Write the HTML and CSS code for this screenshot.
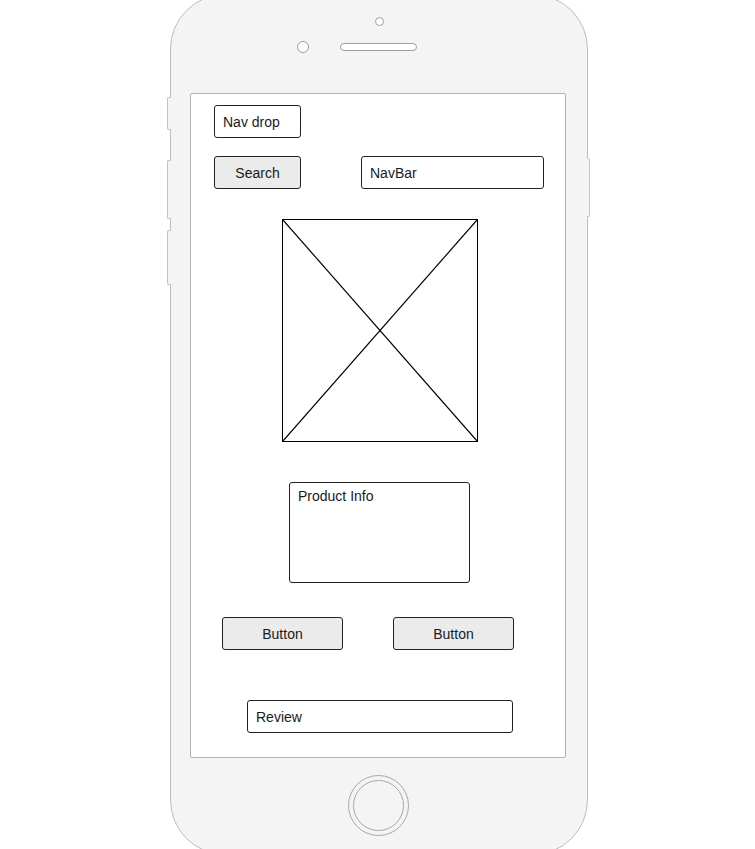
FILE: index.html
```html
<!DOCTYPE html>
<html lang="en">
  <head>
    <meta charset="UTF-8" />
    <meta name="viewport" content="width=device-width, initial-scale=1.0" />
    <title>Product page wireframe</title>
    <link rel="stylesheet" href="styles.css">
  </head>
  <body>
    <div class="phone">
      <span class="side-btn side-btn-1"></span>
      <span class="side-btn side-btn-2"></span>
      <span class="side-btn side-btn-3"></span>
      <span class="side-btn side-btn-right"></span>

      <div class="bezel-top">
        <span class="camera"></span>
        <div class="sensor-row">
          <span class="sensor"></span>
          <span class="speaker"></span>
        </div>
      </div>

      <main class="screen">
        <div class="box nav-drop">Nav drop</div>
        <div class="row-nav">
          <button type="button" class="btn btn-search">Search</button>
          <div class="box navbar">NavBar</div>
        </div>
        <div class="img-holder">
          <svg viewBox="0 0 196 223" preserveAspectRatio="none" width="196" height="223">
            <line x1="0" y1="0" x2="196" y2="223" stroke="#000" stroke-width="1.2" />
            <line x1="196" y1="0" x2="0" y2="223" stroke="#000" stroke-width="1.2" />
          </svg>
        </div>
        <div class="box product-info">Product Info</div>
        <div class="row-buttons">
          <button type="button" class="btn btn-wide">Button</button>
          <button type="button" class="btn btn-wide">Button</button>
        </div>
        <div class="box review">Review</div>
      </main>

      <div class="bezel-bottom">
        <div class="home">
          <span class="home-inner"></span>
        </div>
      </div>
    </div>
  </body>
</html>
```

FILE: styles.css
```css
* {
  margin: 0;
  padding: 0;
  box-sizing: border-box;
}
body {
  width: 755px;
  height: 849px;
  overflow: hidden;
  background-color: #fff;
  font-family: "Liberation Sans", Arial, sans-serif;
  font-size: 14px;
  color: #1a1a1a;
}
/* 폰 외곽 : 위쪽이 화면 밖으로 살짝 잘려 있다 */
.phone {
  position: relative;
  width: 418px;
  height: 861px;
  margin: -6px 0 0 170px;
  background-color: #f5f4f5;
  border: 1px solid #bdbdbd;
  border-radius: 55px;
  display: flex;
  flex-direction: column;
}
.side-btn {
  position: absolute;
  left: -4px;
  width: 4px;
  background-color: #f5f4f5;
  border: 1px solid #c4c4c4;
  border-right: none;
  border-radius: 2px 0 0 2px;
}
.side-btn-1 {
  top: 102px;
  height: 33px;
}
.side-btn-2 {
  top: 165px;
  height: 59px;
}
.side-btn-3 {
  top: 235px;
  height: 55px;
}
.side-btn-right {
  left: auto;
  right: -3px;
  top: 163px;
  width: 3px;
  height: 59px;
  border: 1px solid #c4c4c4;
  border-left: none;
  border-radius: 0 2px 2px 0;
}
.bezel-top {
  height: 98px;
  display: flex;
  flex-direction: column;
  align-items: center;
}
.camera {
  width: 9px;
  height: 9px;
  margin-top: 22px;
  border: 1px solid #9e9e9e;
  border-radius: 50%;
  background-color: #fff;
}
.sensor-row {
  align-self: flex-start;
  display: flex;
  align-items: center;
  gap: 31px;
  margin-top: 15px;
  margin-left: 126px;
}
.sensor {
  width: 12px;
  height: 12px;
  border: 1px solid #9e9e9e;
  border-radius: 50%;
  background-color: #fff;
}
.speaker {
  width: 77px;
  height: 8px;
  border: 1px solid #9e9e9e;
  border-radius: 4px;
  background-color: #fff;
}
/* 화면 */
.screen {
  width: 376px;
  height: 665px;
  margin-left: 19px;
  background-color: #fff;
  border: 1px solid #b3b3b3;
  border-radius: 2px;
  display: flex;
  flex-direction: column;
}
.box,
.btn {
  height: 33px;
  border: 1px solid #222;
  border-radius: 3px;
  font-family: inherit;
  font-size: 14px;
  color: #1a1a1a;
}
.box {
  background-color: #fff;
  padding: 0 8px;
  display: flex;
  align-items: center;
}
.btn {
  background-color: #ebebeb;
  text-align: center;
}
.nav-drop {
  width: 87px;
  margin: 11px 0 0 23px;
}
.row-nav {
  display: flex;
  margin-top: 18px;
  margin-left: 23px;
}
.btn-search {
  width: 87px;
}
.navbar {
  width: 183px;
  margin-left: 60px;
}
.img-holder {
  width: 196px;
  height: 223px;
  margin: 30px 0 0 91px;
  border: 1px solid #000;
  overflow: hidden;
}
.img-holder svg {
  display: block;
  width: 100%;
  height: 100%;
}
.product-info {
  width: 181px;
  height: 101px;
  margin: 40px 0 0 98px;
  align-items: flex-start;
  padding-top: 5px;
}
.row-buttons {
  display: flex;
  gap: 50px;
  margin: 34px 0 0 31px;
}
.btn-wide {
  width: 121px;
}
.review {
  width: 266px;
  margin: 50px 0 0 56px;
}
/* 홈버튼 */
.bezel-bottom {
  display: flex;
  justify-content: center;
  padding-top: 17px;
  padding-right: 2px;
}
.home {
  width: 61px;
  height: 61px;
  border: 1px solid #a8a8a8;
  border-radius: 50%;
  display: flex;
  align-items: center;
  justify-content: center;
}
.home-inner {
  width: 51px;
  height: 51px;
  border: 1px solid #a8a8a8;
  border-radius: 50%;
}
```
